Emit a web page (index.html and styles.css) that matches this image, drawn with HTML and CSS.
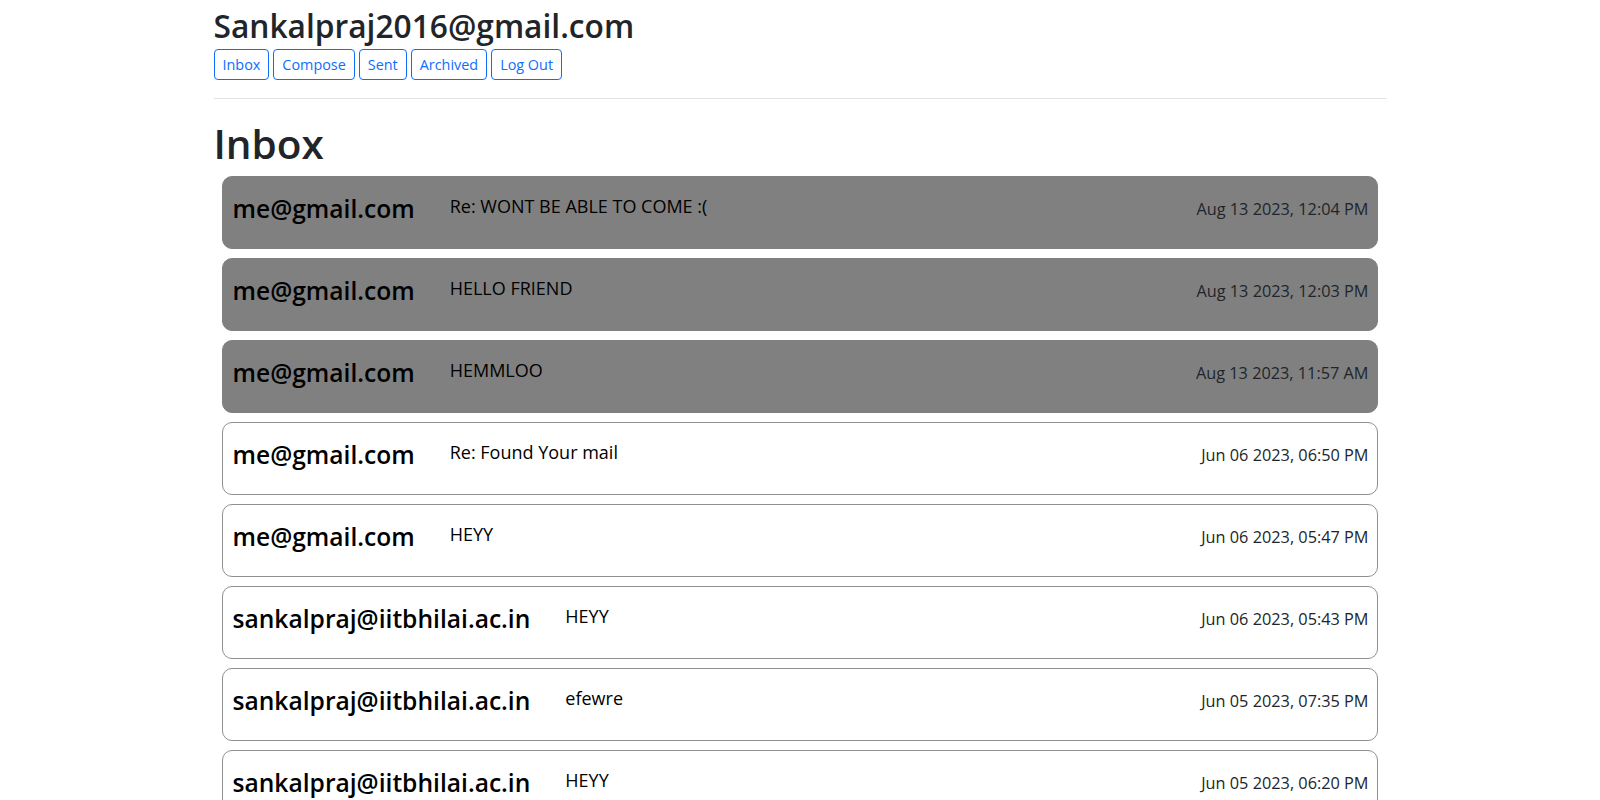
FILE: index.html
```html
<!DOCTYPE html>
<html lang="en">
<head>
<meta charset="utf-8">
<title>Mail</title>
<link rel="stylesheet" href="styles.css">
</head>
<body>
<div class="container">
  <h2 class="user">Sankalpraj2016@gmail.com</h2>
  <nav class="nav">
    <button class="btn">Inbox</button>
    <button class="btn">Compose</button>
    <button class="btn">Sent</button>
    <button class="btn">Archived</button>
    <button class="btn">Log Out</button>
  </nav>
  <hr class="rule">
  <h1 class="title">Inbox</h1>
  <div class="list">
    <div class="mail read">
      <h4 class="sender">me@gmail.com</h4>
      <span class="subject">Re: WONT BE ABLE TO COME :(</span>
      <span class="date">Aug 13 2023, 12:04 PM</span>
    </div>
    <div class="mail read">
      <h4 class="sender">me@gmail.com</h4>
      <span class="subject">HELLO FRIEND</span>
      <span class="date">Aug 13 2023, 12:03 PM</span>
    </div>
    <div class="mail read">
      <h4 class="sender">me@gmail.com</h4>
      <span class="subject">HEMMLOO</span>
      <span class="date">Aug 13 2023, 11:57 AM</span>
    </div>
    <div class="mail">
      <h4 class="sender">me@gmail.com</h4>
      <span class="subject">Re: Found Your mail</span>
      <span class="date">Jun 06 2023, 06:50 PM</span>
    </div>
    <div class="mail">
      <h4 class="sender">me@gmail.com</h4>
      <span class="subject">HEYY</span>
      <span class="date">Jun 06 2023, 05:47 PM</span>
    </div>
    <div class="mail">
      <h4 class="sender">sankalpraj@iitbhilai.ac.in</h4>
      <span class="subject">HEYY</span>
      <span class="date">Jun 06 2023, 05:43 PM</span>
    </div>
    <div class="mail">
      <h4 class="sender">sankalpraj@iitbhilai.ac.in</h4>
      <span class="subject">efewre</span>
      <span class="date">Jun 05 2023, 07:35 PM</span>
    </div>
    <div class="mail">
      <h4 class="sender">sankalpraj@iitbhilai.ac.in</h4>
      <span class="subject">HEYY</span>
      <span class="date">Jun 05 2023, 06:20 PM</span>
    </div>
  </div>
</div>
</body>
</html>
```
FILE: styles.css
```css
html, body {
  margin: 0;
  padding: 0;
  background: #fff;
}
body {
  font-family: "Open Sans", "Noto Sans", sans-serif;
  color: #212529;
}
.container {
  width: 1173px;
  margin: 0 auto;
  padding-top: 6px;
}
.user {
  margin: 0 0 4px 0;
  font-size: 31.7px;
  font-weight: 600;
  line-height: 39px;
}
.nav {
  display: flex;
  gap: 4px;
}
.btn {
  font-family: inherit;
  font-size: 14.4px;
  line-height: 21px;
  padding: 4px 8px;
  color: #0d6efd;
  background: #fff;
  border: 1px solid #0d6efd;
  border-radius: 4px;
  cursor: pointer;
}
.rule {
  margin: 18px 0 0 0;
  border: 0;
  border-top: 1px solid #e3e3e3;
  height: 0;
}
.title {
  margin: 20px 0 7.5px 0;
  font-size: 40.5px;
  font-weight: 600;
  line-height: 49px;
}
.list {
  display: flex;
  flex-direction: column;
  gap: 9px;
  padding: 0 9px 0 8px;
}
.mail {
  box-sizing: border-box;
  height: 73px;
  display: flex;
  align-items: flex-start;
  padding: 17px 8px 0 10px;
  border: 1px solid #909090;
  border-radius: 10px;
  background: #fff;
  color: #000;
}
.mail.read {
  background: #808080;
  border-color: #808080;
}
.sender {
  margin: 0 35px 0 0;
  font-size: 24.6px;
  font-weight: 600;
  line-height: 30px;
}
.subject {
  font-size: 18px;
  line-height: 24px;
}
.date {
  margin: 3px 0 0 auto;
  font-size: 16.3px;
  line-height: 24px;
  color: #212529;
}
```
